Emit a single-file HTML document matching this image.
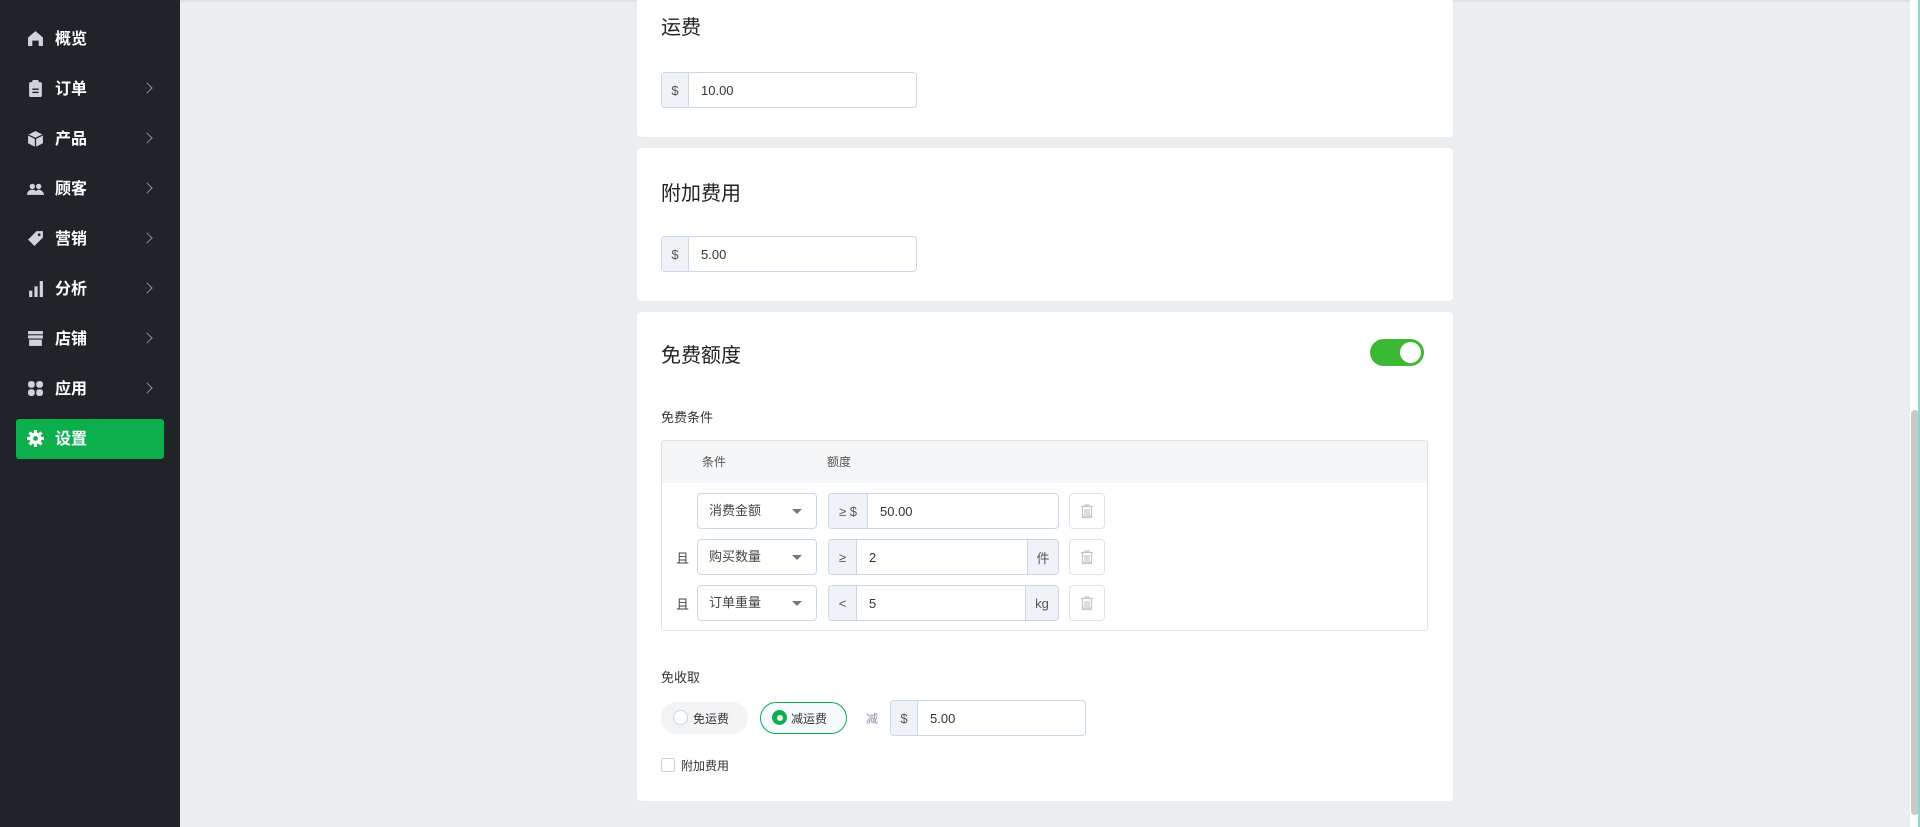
<!DOCTYPE html>
<html><head><meta charset="utf-8"><style>
*{box-sizing:border-box;margin:0;padding:0}
body{width:1920px;height:827px;overflow:hidden;background:#ebeef1;font-family:"Liberation Sans","Noto Sans CJK SC",sans-serif;color:#333;position:relative}
.sb{position:absolute;left:0;top:0;width:180px;height:827px;background:#202328}
.it{position:absolute;left:0;width:180px;height:40px;color:#fff;font-size:16px;font-weight:bold}
.it .ic{position:absolute;left:27px;top:11px;width:17px;height:17px}
.it .tx{position:absolute;left:55px;top:11px;line-height:20px}
.it .ch{position:absolute;left:143px;top:15px;width:8px;height:8px;border-right:1.5px solid #8a8f96;border-top:1.5px solid #8a8f96;transform:rotate(45deg)}
.act{position:absolute;left:16px;top:419px;width:148px;height:40px;background:#0bb04d;border-radius:3px}
.topline{position:absolute;left:180px;top:0;width:1730px;height:2px;background:#dde1e4}
.card{position:absolute;left:637px;width:816px;background:#fff;border-radius:4px}
.title{position:absolute;left:24px;font-size:20px;color:#222}
.ig{position:absolute;height:36px;border:1px solid #c9d7ea;border-radius:4px;background:#fff;font-size:13px;display:flex;overflow:hidden}
.ig .pre{background:#eff2f6;border-right:1px solid #c9d7ea;display:flex;align-items:center;justify-content:center;color:#555}
.ig .val{padding-left:12px;display:flex;align-items:center;color:#333}
.ig .suf{margin-left:auto;background:#eff2f6;border-left:1px solid #c9d7ea;width:31px;display:flex;align-items:center;justify-content:center;color:#555}
.lbl{position:absolute;font-size:13px;color:#333}
.sel{position:absolute;left:697px;width:120px;height:36px;border:1px solid #c9d7ea;border-radius:4px;font-size:13px;color:#444;padding-left:11px;line-height:34px}
.sel:after{content:"";position:absolute;right:14px;top:15px;border-left:5px solid transparent;border-right:5px solid transparent;border-top:5px solid #777}
.del{position:absolute;left:1069px;width:36px;height:36px;border:1px solid #dfe3e8;border-radius:4px}
.qie{position:absolute;left:676px;font-size:13px;color:#444}
</style></head><body>
<div class="sb">
 <div class="act"></div>
 <div class="it" style="top:19px"><svg class="ic" viewBox="0 0 16 16"><path d="M1 7L8 1l7 6v8h-4v-5H5v5H1z" fill="#cfd4dc"/></svg><span class="tx">概览</span></div>
 <div class="it" style="top:69px"><svg class="ic" viewBox="0 0 16 16"><rect x="2" y="2" width="12" height="14" rx="1.5" fill="#cfd4dc"/><rect x="5" y="0" width="6" height="3" rx="1" fill="#cfd4dc"/><rect x="5" y="8" width="6" height="1.3" fill="#202328"/><rect x="5" y="11" width="6" height="1.3" fill="#202328"/></svg><span class="tx">订单</span><i class="ch"></i></div>
 <div class="it" style="top:119px"><svg class="ic" viewBox="0 0 16 16"><path d="M8 1l7 3.5v8L8 16 1 12.5v-8z" fill="#cfd4dc"/><path d="M1 4.5L8 8l7-3.5M8 8v8" stroke="#202328" stroke-width="1.2" fill="none"/></svg><span class="tx">产品</span><i class="ch"></i></div>
 <div class="it" style="top:169px"><svg class="ic" viewBox="0 0 16 16"><circle cx="5" cy="6" r="2.5" fill="#cfd4dc"/><circle cx="11" cy="6" r="2.5" fill="#cfd4dc"/><path d="M0 14c0-3 2-5 5-5s5 2 5 5zM8 14c0-3 1-5 3-5s5 2 5 5z" fill="#cfd4dc"/></svg><span class="tx">顾客</span><i class="ch"></i></div>
 <div class="it" style="top:219px"><svg class="ic" viewBox="0 0 16 16"><path d="M9 1h6v6L7 15 1 9z" fill="#cfd4dc"/><circle cx="11.5" cy="4.5" r="1.3" fill="#202328"/></svg><span class="tx">营销</span><i class="ch"></i></div>
 <div class="it" style="top:269px"><svg class="ic" viewBox="0 0 16 16"><rect x="2" y="10" width="3" height="6" fill="#cfd4dc"/><rect x="7" y="6" width="3" height="10" fill="#cfd4dc"/><rect x="12" y="1" width="3" height="15" fill="#cfd4dc"/></svg><span class="tx">分析</span><i class="ch"></i></div>
 <div class="it" style="top:319px"><svg class="ic" viewBox="0 0 16 16"><rect x="1" y="1" width="14" height="3" fill="#cfd4dc"/><rect x="1" y="5" width="14" height="3" fill="#cfd4dc"/><rect x="2" y="9" width="12" height="6" fill="#cfd4dc"/></svg><span class="tx">店铺</span><i class="ch"></i></div>
 <div class="it" style="top:369px"><svg class="ic" viewBox="0 0 16 16"><rect x="1" y="1" width="6.3" height="6.3" rx="2.5" fill="#cfd4dc"/><rect x="8.7" y="1" width="6.3" height="6.3" rx="2.5" fill="#cfd4dc"/><rect x="1" y="8.7" width="6.3" height="6.3" rx="2.5" fill="#cfd4dc"/><rect x="8.7" y="8.7" width="6.3" height="6.3" rx="2.5" fill="#cfd4dc"/></svg><span class="tx">应用</span><i class="ch"></i></div>
 <div class="it" style="top:419px"><svg class="ic" viewBox="0 0 16 16"><g fill="#fff"><circle cx="8" cy="8" r="5.5"/><rect x="6.5" y="0" width="3" height="16"/><rect x="0" y="6.5" width="16" height="3"/><rect x="6.5" y="0" width="3" height="16" transform="rotate(45 8 8)"/><rect x="6.5" y="0" width="3" height="16" transform="rotate(-45 8 8)"/></g><circle cx="8" cy="8" r="2.2" fill="#0bb04d"/></svg><span class="tx">设置</span></div>
</div>
<div class="topline"></div>

<div class="card" style="top:-5px;height:142px">
 <div class="title" style="top:16px">运费</div>
 <div class="ig" style="left:24px;top:77px;width:256px"><div class="pre" style="width:27px">$</div><div class="val">10.00</div></div>
</div>
<div class="card" style="top:148px;height:153px">
 <div class="title" style="top:29px">附加费用</div>
 <div class="ig" style="left:24px;top:88px;width:256px"><div class="pre" style="width:27px">$</div><div class="val">5.00</div></div>
</div>
<div class="card" style="top:312px;height:489px">
 <div class="title" style="top:27px">免费额度</div>
 <div style="position:absolute;left:733px;top:27px;width:54px;height:27px;border-radius:14px;background:#3cb934"><div style="position:absolute;right:3px;top:3px;width:21px;height:21px;border-radius:50%;background:#fff"></div></div>
 <div class="lbl" style="left:24px;top:95px">免费条件</div>
 <div style="position:absolute;left:24px;top:128px;width:767px;height:191px;border:1px solid #dde2e8;border-radius:3px;overflow:hidden"><div style="height:42px;background:#f4f5f7"></div></div>
 <div class="lbl" style="left:65px;top:141px;color:#555;font-size:12px">条件</div>
 <div class="lbl" style="left:190px;top:141px;color:#555;font-size:12px">额度</div>
</div>

<div class="sel" style="top:493px">消费金额</div>
<div class="ig" style="left:828px;top:493px;width:231px"><div class="pre" style="width:39px">≥ $</div><div class="val">50.00</div></div>
<div class="del" style="top:493px"></div>
<div class="qie" style="top:548px">且</div>
<div class="sel" style="top:539px">购买数量</div>
<div class="ig" style="left:828px;top:539px;width:231px"><div class="pre" style="width:28px">≥</div><div class="val">2</div><div class="suf">件</div></div>
<div class="del" style="top:539px"></div>
<div class="qie" style="top:594px">且</div>
<div class="sel" style="top:585px">订单重量</div>
<div class="ig" style="left:828px;top:585px;width:231px"><div class="pre" style="width:28px">&lt;</div><div class="val">5</div><div class="suf" style="width:33px">kg</div></div>
<div class="del" style="top:585px"></div>

<svg style="position:absolute;left:1079px;top:503px" width="16" height="16" viewBox="0 0 16 16"><g stroke="#c3c6ca" fill="none" stroke-width="1.2"><path d="M2 3.5h12M6 3.5V2h4v1.5M3.5 3.5v11h9v-11M6 6v6M8 6v6M10 6v6M3.5 13h9"/></g></svg>
<svg style="position:absolute;left:1079px;top:549px" width="16" height="16" viewBox="0 0 16 16"><g stroke="#c3c6ca" fill="none" stroke-width="1.2"><path d="M2 3.5h12M6 3.5V2h4v1.5M3.5 3.5v11h9v-11M6 6v6M8 6v6M10 6v6M3.5 13h9"/></g></svg>
<svg style="position:absolute;left:1079px;top:595px" width="16" height="16" viewBox="0 0 16 16"><g stroke="#c3c6ca" fill="none" stroke-width="1.2"><path d="M2 3.5h12M6 3.5V2h4v1.5M3.5 3.5v11h9v-11M6 6v6M8 6v6M10 6v6M3.5 13h9"/></g></svg>

<div class="lbl" style="left:661px;top:667px">免收取</div>
<div style="position:absolute;left:661px;top:702px;width:87px;height:32px;border-radius:16px;background:#f2f3f5"></div>
<div style="position:absolute;left:673px;top:710px;width:15px;height:15px;border-radius:50%;border:1px solid #c9d3e0;background:#fff"></div>
<div class="lbl" style="left:693px;top:710px;font-size:12px">免运费</div>
<div style="position:absolute;left:760px;top:702px;width:87px;height:32px;border-radius:16px;border:1px solid #0bb04d;background:#f5fbfd"></div>
<div style="position:absolute;left:772px;top:710px;width:15px;height:15px;border-radius:50%;background:#0bb04d"><div style="position:absolute;left:4.5px;top:4.5px;width:6px;height:6px;border-radius:50%;background:#fff"></div></div>
<div class="lbl" style="left:791px;top:710px;font-size:12px">减运费</div>
<div class="lbl" style="left:866px;top:710px;color:#8a93a8;font-size:12px">减</div>
<div class="ig" style="left:890px;top:700px;width:196px"><div class="pre" style="width:27px">$</div><div class="val">5.00</div></div>
<div style="position:absolute;left:661px;top:758px;width:14px;height:14px;border:1px solid #c9d3e0;border-radius:2px;background:#fff"></div>
<div class="lbl" style="left:681px;top:757px;font-size:12px">附加费用</div>

<div style="position:absolute;left:1910px;top:0;width:10px;height:827px;background:#fff"></div>
<div style="position:absolute;left:1911px;top:410px;width:8px;height:405px;border-radius:4px;background:#c9c9c9"></div>
<div style="position:absolute;left:1918px;top:0;width:2px;height:827px;background:#8fd6d0"></div>
</body></html>
